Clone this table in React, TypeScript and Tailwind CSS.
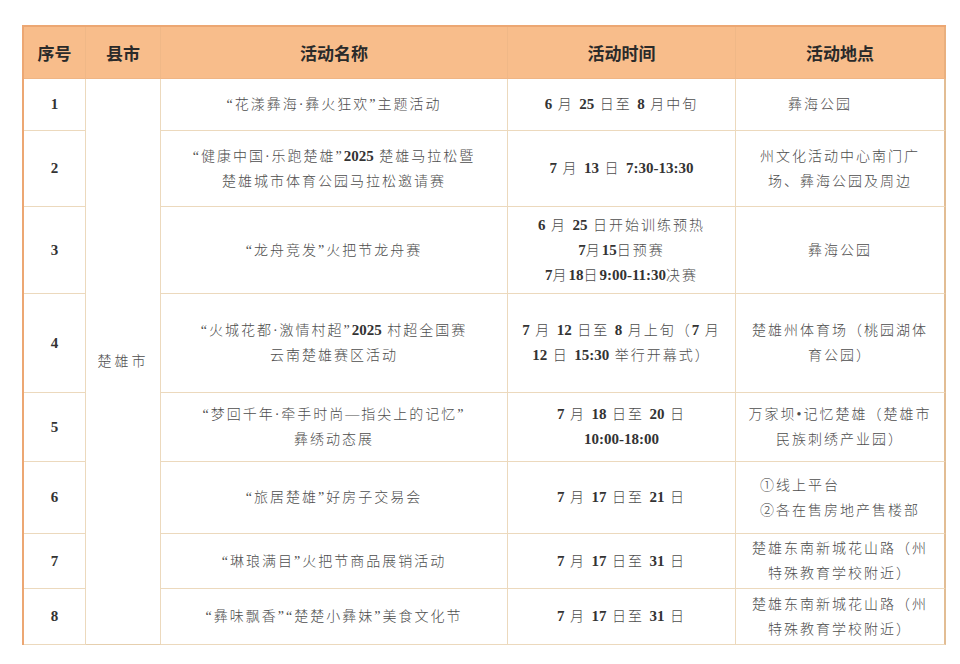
import React from "react";

type Row = {
    no: string;
    name: string[];
    time: string[];
    place: string[];
    placeClass?: string;
    placeLeft?: boolean;
};

const rows: Row[] = [
    { no: "1", name: ["“花漾彝海·彝火狂欢”主题活动"], time: ["6 月 25 日至 8 月中旬"], place: ["彝海公园"], placeClass: "pr-10" },
    {
        no: "2",
        name: ["“健康中国·乐跑楚雄”2025 楚雄马拉松暨", "楚雄城市体育公园马拉松邀请赛"],
        time: ["7 月 13 日 7:30-13:30"],
        place: ["州文化活动中心南门广", "场、彝海公园及周边"],
    },
    {
        no: "3",
        name: ["“龙舟竞发”火把节龙舟赛"],
        time: ["6 月 25 日开始训练预热", "7月15日预赛", "7月18日9:00-11:30决赛"],
        place: ["彝海公园"],
    },
    {
        no: "4",
        name: ["“火城花都·激情村超”2025 村超全国赛", "云南楚雄赛区活动"],
        time: ["7 月 12 日至 8 月上旬（7 月", "12 日 15:30 举行开幕式）"],
        place: ["楚雄州体育场（桃园湖体", "育公园）"],
    },
    {
        no: "5",
        name: ["“梦回千年·牵手时尚—指尖上的记忆”", "彝绣动态展"],
        time: ["7 月 18 日至 20 日", "10:00-18:00"],
        place: ["万家坝•记忆楚雄（楚雄市", "民族刺绣产业园）"],
    },
    {
        no: "6",
        name: ["“旅居楚雄”好房子交易会"],
        time: ["7 月 17 日至 21 日"],
        place: ["①线上平台", "②各在售房地产售楼部"],
        placeLeft: true,
    },
    {
        no: "7",
        name: ["“琳琅满目”火把节商品展销活动"],
        time: ["7 月 17 日至 31 日"],
        place: ["楚雄东南新城花山路（州", "特殊教育学校附近）"],
    },
    {
        no: "8",
        name: ["“彝味飘香”“楚楚小彝妹”美食文化节"],
        time: ["7 月 17 日至 31 日"],
        place: ["楚雄东南新城花山路（州", "特殊教育学校附近）"],
    },
];

const serif = "font-['Liberation_Serif','Noto_Sans_CJK_SC',serif]";
const cell = "flex items-center justify-center border-r border-b border-[#ecd9bd] text-center";

// digits come out bold serif and tight, the Chinese text stays light and spaced
function Line({ text }: { text: string }) {
    const parts = text.split(/([0-9][0-9:\-]*)/);
    return (
        <div className="leading-[25px] whitespace-nowrap">
            {parts.map((p, i) =>
                /^[0-9]/.test(p) ? (
                    <span key={i} className="text-[15px] font-bold tracking-normal text-[#333]">
                        {p}
                    </span>
                ) : (
                    <span key={i}>{p}</span>
                )
            )}
        </div>
    );
}

export default function App() {
    const headers = ["序号", "县市", "活动名称", "活动时间", "活动地点"];

    return (
        <div className="w-[960px] h-[664px] bg-white pt-[25px] pl-[22px]">
            <div
                className={`grid w-fit grid-cols-[62px_75px_347px_228px_210px] grid-rows-[52px_52px_76px_87px_99px_69px_72px_55px_56px] border-l-2 border-t-2 border-[#eca773] ${serif} text-[14px] font-light tracking-[2px] text-[#4d4d4d]`}
            >
                {headers.map((h, i) => (
                    <div
                        key={h}
                        className={`${cell} bg-[#f8bd8b] border-b-[#efb585] font-['Noto_Sans_CJK_SC',sans-serif] text-[17px] font-bold tracking-normal text-[#2a2a2a] ${i === 4 ? "border-r-2 border-r-[#e9b07f]" : "border-r-[#f0b887]"}`}
                    >
                        {h}
                    </div>
                ))}

                {rows.map((r, idx) => (
                    <React.Fragment key={r.no}>
                        <div className={`${cell} text-[15px] font-bold text-[#333] tracking-normal`}>{r.no}</div>
                        {idx === 0 && (
                            <div className={`${cell} row-span-8 border-b-[#e6cfae] tracking-[3px]`}>楚雄市</div>
                        )}
                        <div className={`${cell} flex-col`}>
                            {r.name.map((t) => (
                                <Line key={t} text={t} />
                            ))}
                        </div>
                        <div className={`${cell} flex-col`}>
                            {r.time.map((t) => (
                                <Line key={t} text={t} />
                            ))}
                        </div>
                        <div className={`${cell} border-r-2 border-r-[#e2bd94] ${r.placeClass ?? ""}`}>
                            <div className={r.placeLeft ? "text-left" : "flex flex-col items-center"}>
                                {r.place.map((t) => (
                                    <Line key={t} text={t} />
                                ))}
                            </div>
                        </div>
                    </React.Fragment>
                ))}
            </div>
        </div>
    );
}
